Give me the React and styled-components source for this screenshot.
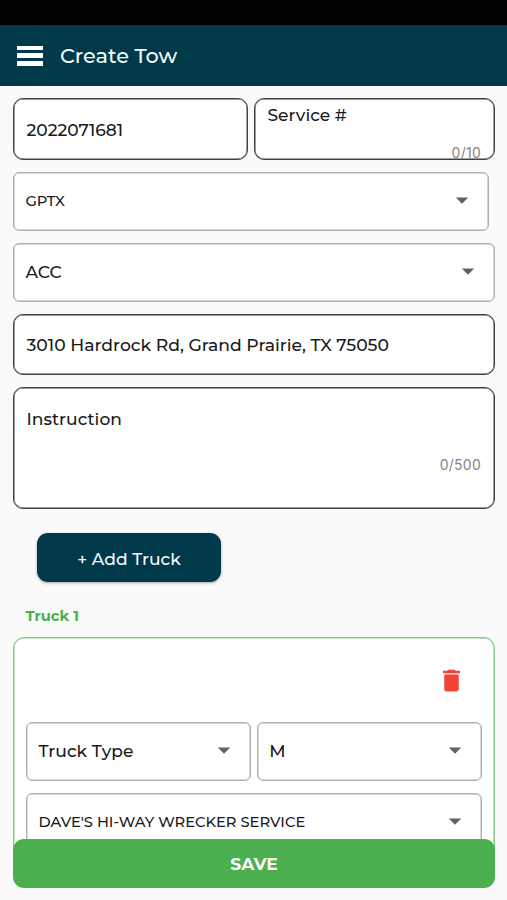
import * as React from "react";
import styled, { createGlobalStyle } from "styled-components";
import { MdArrowDropDown, MdDelete } from "react-icons/md";

const GlobalStyle = createGlobalStyle`
  * {
    box-sizing: border-box;
  }
  body {
    margin: 0;
    background-color: #fafafa;
    font-family: Montserrat, Inter, "Liberation Sans", sans-serif;
    color: #1a1a1a;
  }
`;

const Screen = styled.div`
  height: 900px;
  display: flex;
  flex-direction: column;
  overflow: hidden;
`;

const StatusBar = styled.div`
  flex: none;
  height: 25px;
  background-color: #000;
`;

const Header = styled.header`
  flex: none;
  height: 61px;
  display: flex;
  align-items: center;
  gap: 17px;
  padding-left: 17px;
  background-color: #003a4a;
`;

const MenuButton = styled.button`
  width: 26px;
  height: 20px;
  padding: 0;
  border: 0;
  background: none;
  display: flex;
  flex-direction: column;
  justify-content: space-between;
`;

const MenuLine = styled.span`
  height: 4.5px;
  background-color: #fff;
`;

const Text = styled.span`
  font-size: ${(props) => props.$size || 17.1}px;
  font-weight: ${(props) => props.$weight || 500};
  line-height: 22px;
  white-space: nowrap;
`;

const Title = styled.h1`
  margin: 0;
  font-size: 20.8px;
  font-weight: 500;
  color: #f2f9fa;
`;

const Content = styled.main`
  flex: none;
  height: 768px;
  display: flex;
  flex-direction: column;
  gap: 12px;
  padding: 12px 12px 0 13px;
  overflow: hidden;
`;

const Row = styled.div`
  display: grid;
  grid-template-columns: ${(props) => props.$columns};
  gap: 6px;
`;

const Field = styled.div`
  flex: none;
  height: ${(props) => props.$height || 62}px;
  display: flex;
  align-items: center;
  padding: 1px 13px 0 12.5px;
  border: 1px solid #404040;
  box-shadow: inset 0 0 0 0.5px #404040;
  border-radius: 10px;
  background-color: #fff;
`;

const ServiceField = styled(Field)`
  flex-direction: column;
  align-items: stretch;
  justify-content: space-between;
  padding-top: 5px;
`;

const InstructionField = styled(ServiceField)`
  height: 122px;
  justify-content: flex-start;
  gap: 25px;
  padding-top: 20px;
`;

const Counter = styled.span`
  align-self: flex-end;
  font-family: Inter, sans-serif;
  font-size: 14px;
  letter-spacing: 0.25px;
  line-height: 20px;
  color: #858585;
  margin-bottom: ${(props) => props.$drop || 0}px;
`;

const Select = styled.div`
  flex: none;
  height: 59px;
  margin-right: ${(props) => props.$inset || 0}px;
  display: flex;
  align-items: center;
  justify-content: space-between;
  padding: 0 11px 2px 11.5px;
  border: 1px solid #b0b0b0;
  box-shadow: inset 0 0 0 0.5px #b0b0b0;
  border-radius: 6px;
  background-color: #fff;

  svg {
    flex: none;
    margin-top: -1px;
    font-size: 30px;
    color: #636363;
  }
`;

const AddButton = styled.button`
  flex: none;
  width: 184px;
  height: 49px;
  margin: 12px 0 0 24px;
  padding: 2px 0 0;
  border: 0;
  border-radius: 11px;
  background-color: #003a4a;
  box-shadow: 0 1px 3px rgba(0, 0, 0, 0.35);
  color: #f5fafa;
  font-family: inherit;
`;

const TruckLabel = styled.div`
  flex: none;
  height: 31px;
  padding: 11px 0 0 12.5px;
  color: #4caf50;
  display: flex;
`;

const TruckCard = styled.section`
  flex: none;
  height: 240px;
  display: flex;
  flex-direction: column;
  gap: 12px;
  padding: 0 12.5px 0 12px;
  border: 1px solid #85c888;
  box-shadow: inset 0 0 0 0.5px #85c888;
  border-radius: 11px;
  background-color: #fff;
`;

const CardActions = styled.div`
  flex: none;
  height: 72px;
  display: flex;
  justify-content: flex-end;
  padding: 27.5px 15.5px 0 0;

  svg {
    font-size: 29px;
    color: #f44336;
  }
`;

const SaveButton = styled.button`
  flex: none;
  position: relative;
  height: 48.5px;
  margin: -15px 12px 0 13px;
  padding: 2px 0 0;
  border: 0;
  border-radius: 11px;
  background-color: #4caf50;
  color: #fff;
  font-family: inherit;
`;

const SelectField = ({ value, inset, size }) => (
  <Select $inset={inset}>
    <Text $size={size}>{value}</Text>
    <MdArrowDropDown />
  </Select>
);

const App = () => {
  return (
    <>
      <GlobalStyle />
      <Screen>
        <StatusBar />
        <Header>
          <MenuButton aria-label="Menu">
            <MenuLine />
            <MenuLine />
            <MenuLine />
          </MenuButton>
          <Title>Create Tow</Title>
        </Header>

        <Content>
          <Row $columns="235px 1fr">
            <Field>
              <Text>2022071681</Text>
            </Field>
            <ServiceField>
              <Text>Service #</Text>
              <Counter $drop={-4}>0/10</Counter>
            </ServiceField>
          </Row>
          <SelectField value="GPTX" inset={6} size={14.7} />
          <SelectField value="ACC" />
          <Field $height={61}>
            <Text $size={17.2}>3010 Hardrock Rd, Grand Prairie, TX 75050</Text>
          </Field>
          <InstructionField>
            <Text>Instruction</Text>
            <Counter>0/500</Counter>
          </InstructionField>

          <AddButton>
            <Text>+ Add Truck</Text>
          </AddButton>
          <TruckLabel>
            <Text $size={14.7} $weight={700}>Truck 1</Text>
          </TruckLabel>

          <TruckCard>
            <CardActions>
              <MdDelete />
            </CardActions>
            <Row $columns="1fr 1fr">
              <SelectField value="Truck Type" />
              <SelectField value="M" />
            </Row>
            <SelectField value="DAVE'S HI-WAY WRECKER SERVICE" size={14.7} />
          </TruckCard>
        </Content>

        <SaveButton>
          <Text $weight={700}>SAVE</Text>
        </SaveButton>
      </Screen>
    </>
  );
};

export default App;
